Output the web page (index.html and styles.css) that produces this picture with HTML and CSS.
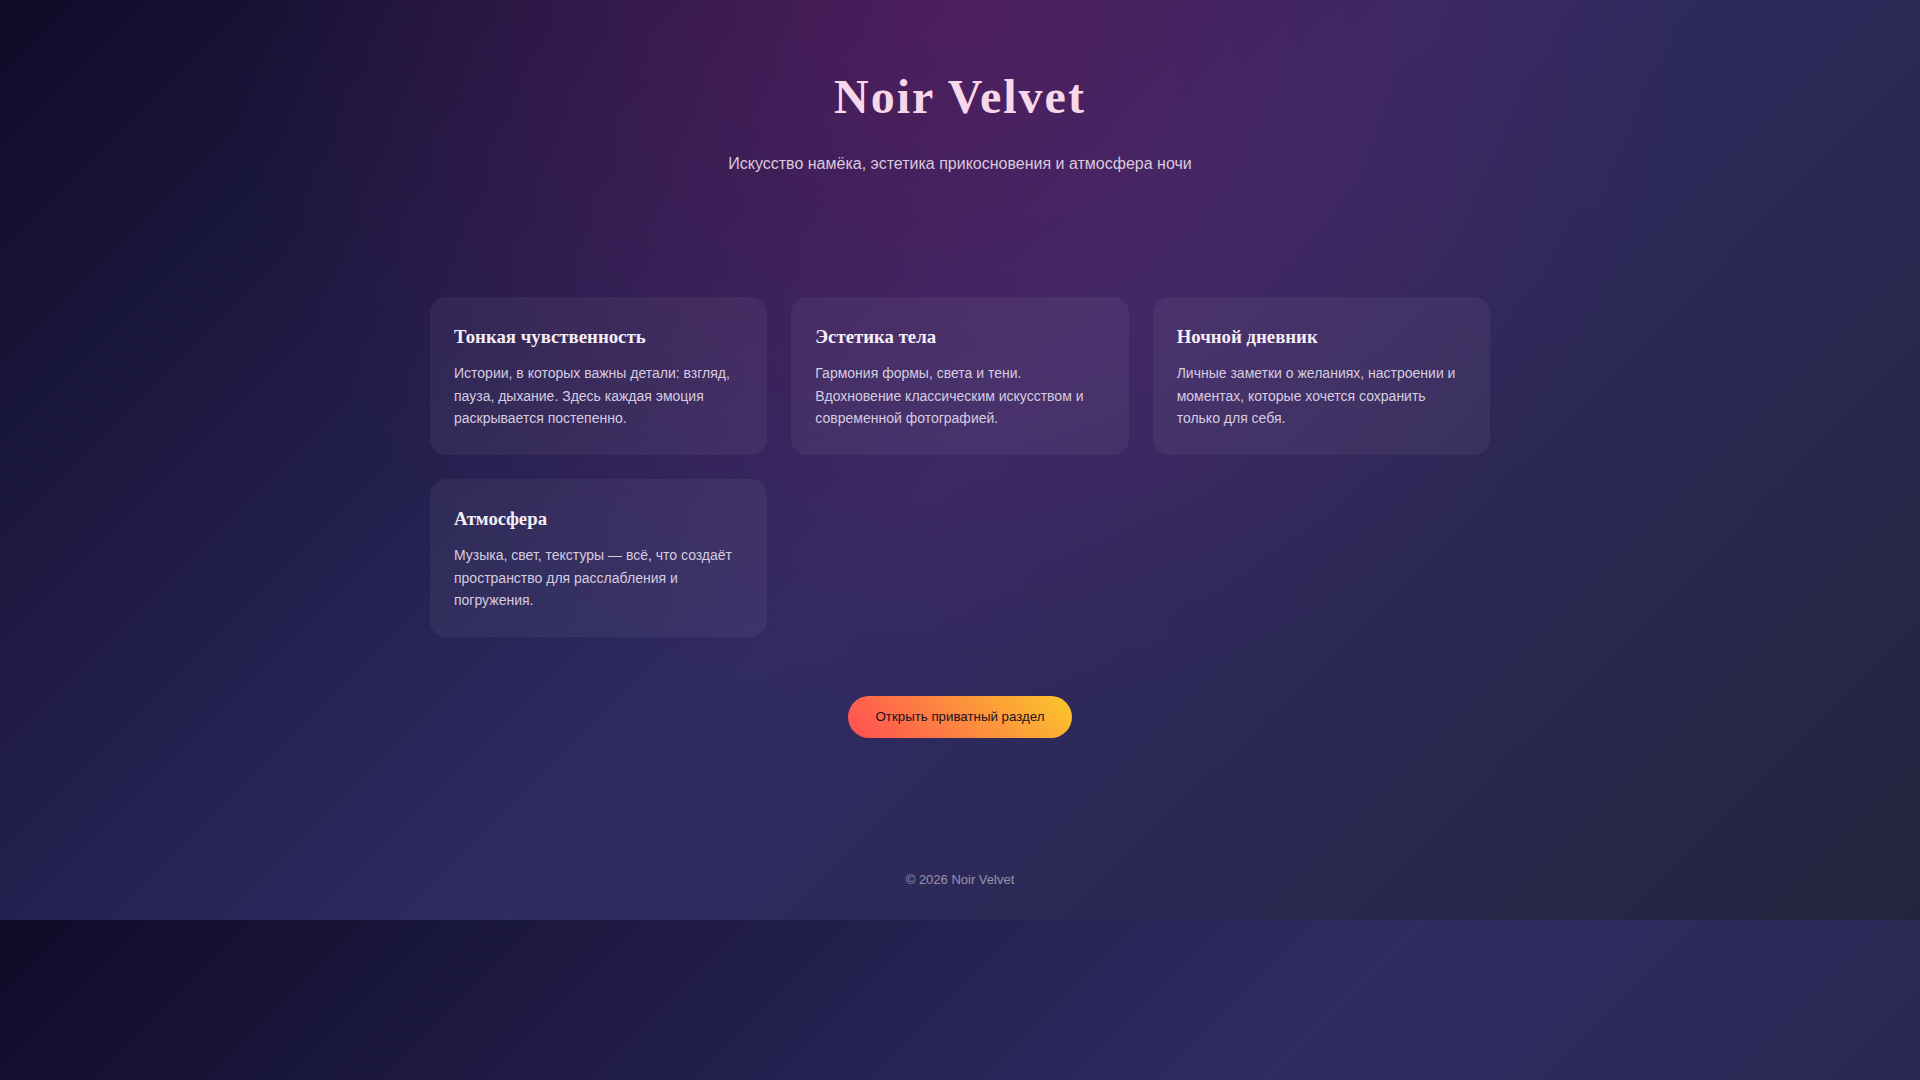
FILE: index.html
```html
<!DOCTYPE html>
<html lang="ru">
<head>
<meta charset="utf-8">
<title>Noir Velvet</title>
<link rel="stylesheet" href="styles.css">
</head>
<body>
  <header class="hero">
    <h1 class="hero-title">Noir Velvet</h1>
    <p class="hero-sub">Искусство намёка, эстетика прикосновения и атмосфера ночи</p>
  </header>
  <main class="content">
    <section class="cards">
      <article class="card">
        <h3 class="card-title">Тонкая чувственность</h3>
        <p class="card-text">Истории, в которых важны детали: взгляд, пауза, дыхание. Здесь каждая эмоция раскрывается постепенно.</p>
      </article>
      <article class="card">
        <h3 class="card-title">Эстетика тела</h3>
        <p class="card-text">Гармония формы, света и тени. Вдохновение классическим искусством и современной фотографией.</p>
      </article>
      <article class="card">
        <h3 class="card-title">Ночной дневник</h3>
        <p class="card-text">Личные заметки о желаниях, настроении и моментах, которые хочется сохранить только для себя.</p>
      </article>
      <article class="card">
        <h3 class="card-title">Атмосфера</h3>
        <p class="card-text">Музыка, свет, текстуры — всё, что создаёт пространство для расслабления и погружения.</p>
      </article>
    </section>
    <div class="cta-wrap">
      <a class="cta" href="#">Открыть приватный раздел</a>
    </div>
  </main>
  <footer class="footer">© 2026 Noir Velvet</footer>
</body>
</html>
```

FILE: styles.css
```css
html {
  background: linear-gradient(135deg, #0f0c29, #302b63, #24243e);
}

body {
  margin: 0;
  font-family: "Liberation Sans", Arial, sans-serif;
  line-height: 1.6;
  color: #e8e0ee;
  background:
    radial-gradient(circle at 50% 0%, rgba(150, 25, 115, 0.36), rgba(150, 25, 115, 0) 55%),
    linear-gradient(135deg, #0f0c29, #302b63, #24243e);
}

.hero {
  text-align: center;
  padding: 59px 20px 0;
}

.hero-title {
  margin: 0;
  font-family: "Liberation Serif", "Times New Roman", serif;
  font-size: 48px;
  font-weight: 700;
  letter-spacing: 2px;
  color: #f8d7ea;
}

.hero-sub {
  margin: 15px 0 0;
  font-size: 16px;
  color: #d9c8de;
}

.content {
  width: 1060px;
  margin: 0 auto;
  padding-top: 121px;
}

.cards {
  display: grid;
  grid-template-columns: repeat(3, 1fr);
  gap: 24px;
}

.card {
  background: rgba(255, 255, 255, 0.05);
  border-radius: 16px;
  padding: 25px 24px 25.5px;
}

.card-title {
  margin: 0 0 10px;
  font-family: "Liberation Serif", "Times New Roman", serif;
  font-size: 18.8px;
  font-weight: 700;
  color: #f6eef6;
}

.card-text {
  margin: 0;
  font-size: 14px;
  color: #d6cce0;
}

.cta-wrap {
  text-align: center;
  margin-top: 59px;
}

.cta {
  display: inline-block;
  padding: 12px 28px;
  font-size: 13.3px;
  line-height: 18px;
  color: #1a1222;
  text-decoration: none;
  border-radius: 999px;
  background: linear-gradient(45deg, #ff4d53, #fbc72a);
}

.footer {
  text-align: center;
  font-size: 13px;
  color: rgba(255, 255, 255, 0.5);
  margin-top: 132px;
  padding-bottom: 29px;
}
```
